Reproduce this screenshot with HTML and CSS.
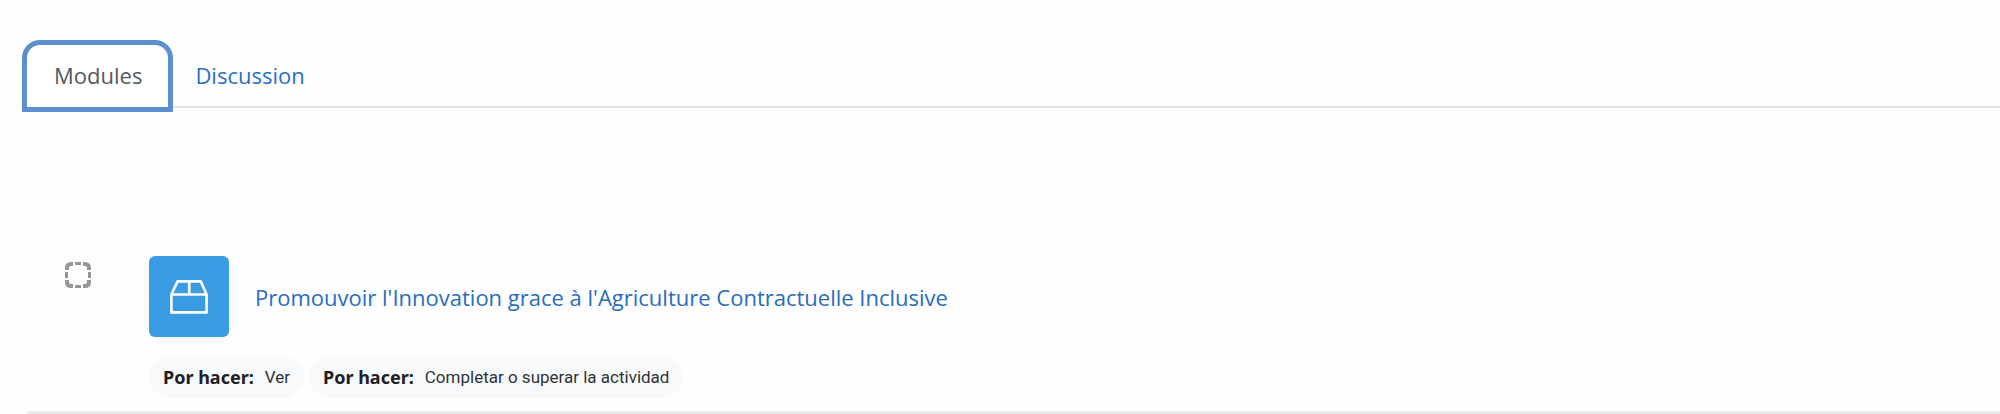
FILE: index.html
```html
<!DOCTYPE html>
<html lang="fr">
<head>
<meta charset="utf-8">
<meta name="viewport" content="width=device-width, initial-scale=1">
<title>Modules</title>
<link rel="stylesheet" href="styles.css">
</head>
<body>
<nav class="tabs">
  <a class="tab tab-active" href="#modules">Modules</a>
  <a class="tab" href="#discussion">Discussion</a>
</nav>
<main class="activity">
  <svg class="completion" viewBox="0 0 26 26" role="img" aria-label="Por hacer">
    <g fill="none" stroke="#969696" stroke-width="4">
      <path d="M2 8V6Q2 2 6 2H8M18 2h2Q24 2 24 6V8M24 18v2Q24 24 20 24H18M8 24H6Q2 24 2 20V18"/>
      <path stroke-width="3" d="M10 1.5h6M10 24.5h6M1.5 10v6M24.5 10v6"/>
    </g>
  </svg>
  <div class="content">
    <div class="heading">
      <span class="tile">
        <svg class="box-icon" viewBox="0 0 38 34" aria-hidden="true">
          <path fill="none" stroke="#fff" stroke-width="2.6" stroke-linejoin="round" d="M1.4 14.5V32.4H36.6V14.5ZM1.4 14.5 7.6 1.4H30.8L36.6 14.5M19.2 1.4V14.5"/>
        </svg>
      </span>
      <a class="title" href="#activity">Promouvoir l'Innovation grace à l'Agriculture Contractuelle Inclusive</a>
    </div>
    <div class="badges">
      <span class="badge"><strong class="badge-label">Por hacer:</strong> <span>Ver</span></span>
      <span class="badge"><strong class="badge-label">Por hacer:</strong> <span>Completar o superar la actividad</span></span>
    </div>
  </div>
</main>
</body>
</html>
```
FILE: styles.css
```css
* { box-sizing: border-box; }
body {
  margin: 0;
  padding-top: 45px;
  background: #fefefe;
  color: #2f3338;
  font-family: Roboto, "Noto Sans", sans-serif;
}
a { text-decoration: none; }
.tabs {
  display: flex;
  margin-left: 27px;
  border-bottom: 2px solid #dee2e6;
}
.tab {
  padding: 15px 26px 16px 27px;
  color: #2a6fc3;
  font: 22px/30px "Open Sans", "Noto Sans", sans-serif;
}
.tab-active {
  margin-bottom: -1px;
  border-radius: 13px 13px 0 0;
  background: #fff;
  box-shadow: 0 0 0 5px #5b8fcd;
  color: #54585d;
}
.activity {
  display: flex;
  align-items: flex-start;
  gap: 58px;
  margin: 148px 0 0 27px;
  padding: 0 0 13px 38px;
  border-bottom: 4px solid #e9ebed;
}
.completion {
  flex: none;
  width: 26px;
  height: 26px;
  margin-top: 6px;
}
.heading {
  display: flex;
  align-items: center;
  gap: 26px;
}
.tile {
  display: flex;
  align-items: center;
  justify-content: center;
  width: 80px;
  height: 81px;
  border-radius: 6px;
  background: #399be2;
}
.box-icon {
  width: 38px;
  height: 34px;
}
.title {
  color: #2a6dbb;
  font: 22px/30px "Open Sans", "Noto Sans", sans-serif;
}
.badges {
  display: flex;
  gap: 5px;
  margin-top: 19px;
}
.badge {
  display: flex;
  align-items: center;
  gap: 11px;
  padding: 9px 14px;
  border-radius: 21px;
  background: #f8f9fb;
  font-size: 17px;
  line-height: 24px;
}
.badge-label {
  color: #1d2125;
  font-family: "Noto Sans", sans-serif;
  font-size: 18px;
  font-weight: 700;
}
```
